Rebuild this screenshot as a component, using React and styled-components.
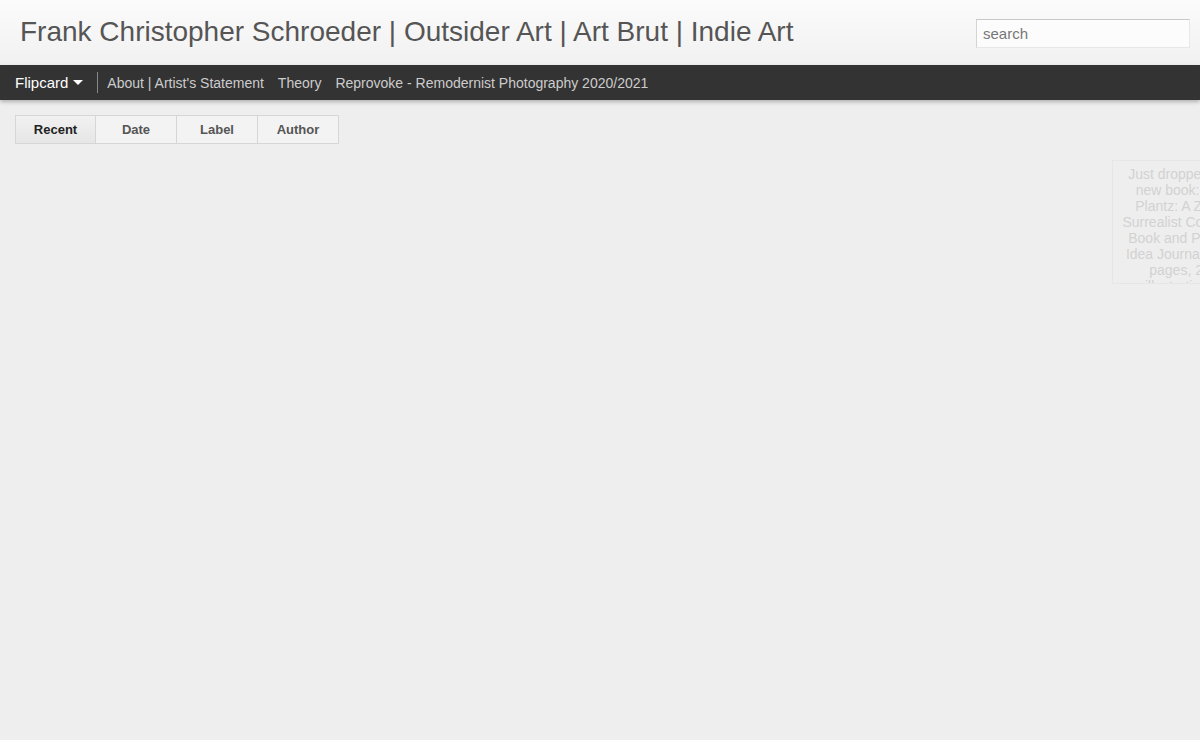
import React from 'react';
import styled, { createGlobalStyle } from 'styled-components';

const GlobalStyle = createGlobalStyle`
    html, body {
        margin: 0;
        padding: 0;
        background: #eeeeee;
        font-family: Arial, "Liberation Sans", sans-serif;
        overflow: hidden;
    }
`

const Page = styled.div`
    width: 1200px;
    height: 740px;
    background: #eeeeee;
    overflow: hidden;
`

const Header = styled.header`
    height: 65px;
    display: flex;
    align-items: center;
    justify-content: space-between;
    padding: 0 10px 0 20px;
    background: linear-gradient(to bottom, #fbfbfb, #f1f1f1);
    box-sizing: border-box;
`

const Title = styled.h1`
    margin: 0 0 1px 0;
    font-size: 28px;
    font-weight: normal;
    color: #555555;
`

const Search = styled.input`
    width: 214px;
    height: 29px;
    box-sizing: border-box;
    margin: 1px 0 0 0;
    padding: 0 6px;
    border: 1px solid #e8e8e8;
    border-top-color: #c8c8c8;
    border-left-color: #d4d4d4;
    background: #fcfcfc;
    font-family: Arial, "Liberation Sans", sans-serif;
    font-size: 15px;
    color: #666;
    outline: none;
    &::placeholder {
        color: #777;
    }
`

const Nav = styled.nav`
    height: 35px;
    background: #333333;
    display: flex;
    align-items: center;
    padding-left: 15px;
    box-shadow: 0 2px 4px rgba(0, 0, 0, 0.25);
    position: relative;
    z-index: 1;
`

const Brand = styled.div`
    display: flex;
    align-items: center;
    gap: 5px;
    color: #ffffff;
    font-size: 15px;
    padding-right: 14px;
`

const Divider = styled.span`
    width: 1px;
    height: 21px;
    background: #888888;
    margin-right: 9px;
`

const NavLink = styled.a`
    color: #cccccc;
    font-size: 14px;
    text-decoration: none;
    margin-right: 14px;
`

const Tabs = styled.div`
    display: flex;
    margin: 15px 0 0 15px;
`

const Tab = styled.div`
    width: 81px;
    height: 29px;
    box-sizing: border-box;
    display: flex;
    align-items: center;
    justify-content: center;
    font-size: 13px;
    font-weight: bold;
    color: ${p => p.active ? '#222222' : '#555555'};
    background: ${p => p.active ? 'linear-gradient(to bottom, #f1f1f1, #e6e6e6)' : '#f3f3f3'};
    border: 1px solid #d6d6d6;
    border-left-width: ${p => p.first ? '1px' : '0'};
`

const Stage = styled.div`
    display: flex;
    justify-content: flex-end;
    margin-top: 16px;
`

const Card = styled.div`
    width: 136px;
    height: 124px;
    flex-shrink: 0;
    margin-right: -48px;
    box-sizing: border-box;
    padding: 5px 0 0;
    border: 1px solid #e6e6e6;
    overflow: hidden;
    text-align: center;
    font-size: 14px;
    line-height: 16px;
    color: #d2d2d2;
    white-space: nowrap;
`

const Caret = () => (
    <svg width="10" height="6" viewBox="0 0 10 6">
        <path d="M0 0 L10 0 L5 5 Z" fill="#ffffff" />
    </svg>
)

const tabs = ['Recent', 'Date', 'Label', 'Author'];

const cardLines = [
    'Just dropped my',
    'new book: Pet',
    'Plantz: A Zany',
    'Surrealist Coloring',
    'Book and Poetry',
    'Idea Journal, 240',
    'pages, 24',
    'illustrations',
];

export default function App() {
    return (
        <Page>
            <GlobalStyle />
            <Header>
                <Title>Frank Christopher Schroeder | Outsider Art | Art Brut | Indie Art</Title>
                <Search placeholder="search" />
            </Header>
            <Nav>
                <Brand>Flipcard <Caret /></Brand>
                <Divider />
                <NavLink>About | Artist's Statement</NavLink>
                <NavLink>Theory</NavLink>
                <NavLink>Reprovoke - Remodernist Photography 2020/2021</NavLink>
            </Nav>
            <Tabs>
                {tabs.map((t, i) => (
                    <Tab key={t} active={i === 0} first={i === 0}>{t}</Tab>
                ))}
            </Tabs>
            <Stage>
                <Card>
                    {cardLines.map((l, i) => <div key={i}>{l}</div>)}
                </Card>
            </Stage>
        </Page>
    )
}
